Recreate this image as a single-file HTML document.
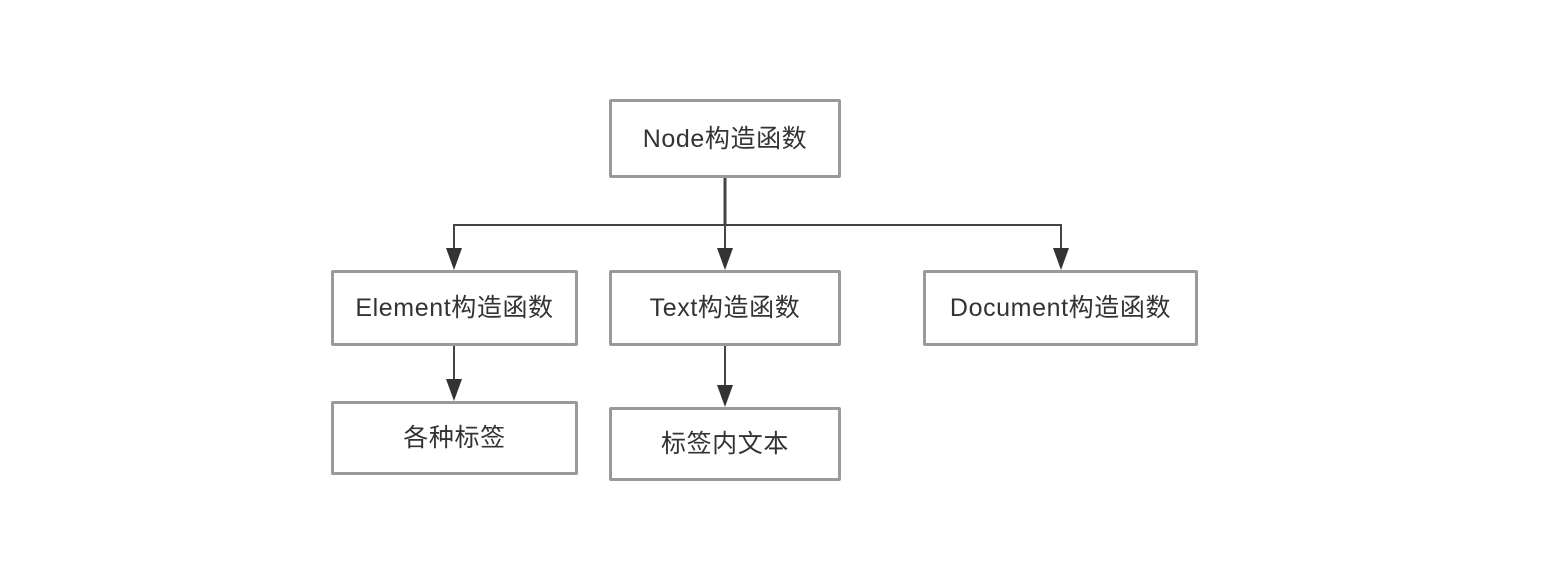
<!DOCTYPE html>
<html><head><meta charset="utf-8"><style>
body{margin:0;width:1566px;height:578px;background:#fff;overflow:hidden;position:relative;font-family:"Liberation Sans","Noto Sans CJK SC",sans-serif}
.b{position:absolute;box-sizing:border-box;border:3px solid #9a9a9a;border-radius:2px;display:flex;align-items:center;justify-content:center;font-size:25px;letter-spacing:0.6px;color:#333;background:#fff;padding-bottom:4px}
svg{position:absolute;left:0;top:0}
</style></head><body>
<svg width="1566" height="578">
<g stroke="#444" fill="none">
<line x1="725" y1="177" x2="725" y2="226" stroke-width="3"/>
<polyline points="454,250 454,225 1061,225 1061,250" stroke-width="2"/>
<line x1="725" y1="225" x2="725" y2="250" stroke-width="2"/>
<line x1="454" y1="345" x2="454" y2="380" stroke-width="2"/>
<line x1="725" y1="345" x2="725" y2="386" stroke-width="2"/>
</g>
<g fill="#333">
<polygon points="446,248 462,248 454,270"/>
<polygon points="717,248 733,248 725,270"/>
<polygon points="1053,248 1069,248 1061,270"/>
<polygon points="446,379 462,379 454,401"/>
<polygon points="717,385 733,385 725,407"/>
</g>
</svg>
<div class="b" style="left:609px;top:99px;width:232px;height:79px">Node构造函数</div>
<div class="b" style="left:331px;top:270px;width:247px;height:76px">Element构造函数</div>
<div class="b" style="left:609px;top:270px;width:232px;height:76px">Text构造函数</div>
<div class="b" style="left:923px;top:270px;width:275px;height:76px">Document构造函数</div>
<div class="b" style="left:331px;top:401px;width:247px;height:74px">各种标签</div>
<div class="b" style="left:609px;top:407px;width:232px;height:74px">标签内文本</div>
</body></html>
